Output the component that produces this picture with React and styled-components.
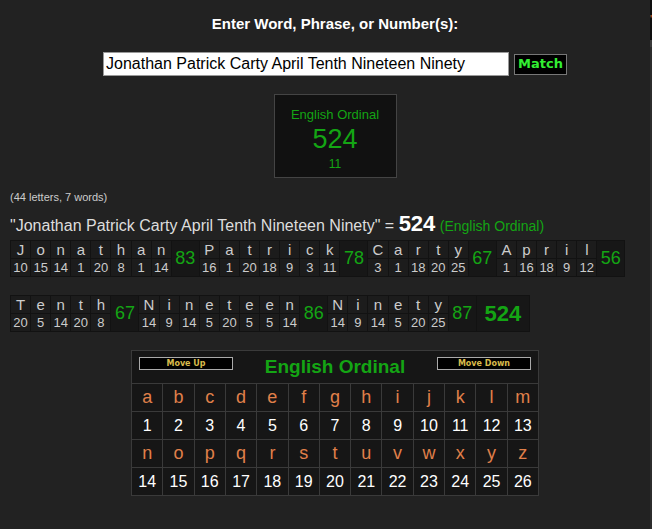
import styled, { createGlobalStyle } from "styled-components";

const GREEN = "#14a514";

const GlobalStyle = createGlobalStyle`
  html, body {
    margin: 0;
    background: #222;
    overflow: hidden;
  }
  body {
    font-family: "Liberation Sans", Arial, sans-serif;
    color: #ddd;
  }
`;

const phrase = "Jonathan Patrick Carty April Tenth Nineteen Ninety";
const rows = [
  ["Jonathan", "Patrick", "Carty", "April"],
  ["Tenth", "Nineteen", "Ninety"],
];
const alphabet = "abcdefghijklmnopqrstuvwxyz".split("");

const value = (ch) => ch.toLowerCase().charCodeAt(0) - 96;
const wordSum = (w) => w.split("").reduce((s, c) => s + value(c), 0);

const App = () => {
  const total = phrase.split(" ").reduce((s, w) => s + wordSum(w), 0);
  return (
    <Page>
      <GlobalStyle />
      <Main>
        <Center>
          <Title>Enter Word, Phrase, or Number(s):</Title>
          <Form>
            <Input defaultValue={phrase} />
            <MatchButton>Match</MatchButton>
          </Form>
          <Panel>
            <PanelName>English Ordinal</PanelName>
            <PanelValue>{total}</PanelValue>
            <PanelCount>11</PanelCount>
          </Panel>
        </Center>

        <Counts>(44 letters, 7 words)</Counts>
        <Sentence>
          "{phrase}" = <Big>{total}</Big> <CipherLabel>(English Ordinal)</CipherLabel>
        </Sentence>

        <Breakdown>
          {rows.map((words, i) => (
            <BreakTable key={i}>
              {words.map((w) => (
                <Word key={w}>
                  {w.split("").map((c, j) => (
                    <LetterCol key={j}>
                      <Cell>{c}</Cell>
                      <Cell $num>{value(c)}</Cell>
                    </LetterCol>
                  ))}
                  <SumCell>{wordSum(w)}</SumCell>
                </Word>
              ))}
              {i === rows.length - 1 && <TotalCell>{total}</TotalCell>}
            </BreakTable>
          ))}
        </Breakdown>

        <Center>
          <CipherGrid>
            <CipherHeader>
              <MoveButton>Move Up</MoveButton>
              <CipherTitle>English Ordinal</CipherTitle>
              <MoveButton>Move Down</MoveButton>
            </CipherHeader>
            {[alphabet.slice(0, 13), alphabet.slice(13)].map((half) => [
              ...half.map((c) => (
                <GridCell key={"l" + c} $letter>
                  {c}
                </GridCell>
              )),
              ...half.map((c) => <GridCell key={"n" + c}>{value(c)}</GridCell>),
            ])}
          </CipherGrid>
        </Center>
      </Main>
      <Side>
        <SideTop>'C</SideTop>
        <SideRest />
      </Side>
    </Page>
  );
};

export default App;

const Page = styled.div`
  display: flex;
  height: 529px;
`;

const Main = styled.div`
  flex: 0 0 647px;
  display: flex;
  flex-direction: column;
`;

const Side = styled.div`
  flex: 1;
  display: flex;
  flex-direction: column;
  overflow: hidden;
`;

const SideTop = styled.div`
  height: 40px;
  background: #0e0e0e;
  color: #e08040;
  font-size: 10px;
  line-height: 40px;
  white-space: nowrap;
`;

const SideRest = styled.div`
  flex: 1;
  background: #2c2c2c;
  border-top: 7px solid #3a3a3a;
`;

const Center = styled.div`
  margin-left: 20px;
  width: 630px;
  display: flex;
  flex-direction: column;
  align-items: center;
`;

const Title = styled.div`
  margin-top: 15px;
  font-size: 15px;
  line-height: 18px;
  font-weight: bold;
  color: #fff;
`;

const Form = styled.div`
  margin-top: 19px;
  display: flex;
  align-items: center;
  gap: 5px;
`;

const Input = styled.input`
  box-sizing: border-box;
  width: 406px;
  height: 24px;
  padding: 0 2px;
  border: 1px solid #999;
  background: #fff;
  color: #000;
  font-family: "Liberation Sans", Arial, sans-serif;
  font-size: 16px;
  outline: none;
`;

const MatchButton = styled.button`
  box-sizing: border-box;
  height: 21px;
  padding: 0 3px;
  background: #000;
  border: 1px solid #777;
  color: #33ee33;
  font-family: "DejaVu Sans", Verdana, sans-serif;
  font-weight: bold;
  font-size: 13px;
  line-height: 18px;
`;

const Panel = styled.div`
  box-sizing: border-box;
  margin-top: 18px;
  padding-top: 6px;
  width: 123px;
  height: 84px;
  background: #111;
  border: 1px solid #444;
  display: flex;
  flex-direction: column;
  align-items: center;
  justify-content: center;
  color: ${GREEN};
`;

const PanelName = styled.div`
  font-size: 13px;
  line-height: 15px;
`;

const PanelValue = styled.div`
  font-size: 27px;
  line-height: 35px;
`;

const PanelCount = styled.div`
  font-size: 12px;
  line-height: 14px;
`;

const Counts = styled.div`
  margin: 13px 0 0 10px;
  font-size: 11px;
  line-height: 13px;
  color: #ccc;
`;

const Sentence = styled.div`
  margin: 10px 0 0 10px;
  font-size: 16px;
  line-height: 20px;
  color: #ddd;
`;

const Big = styled.b`
  font-size: 22px;
  color: #fff;
`;

const CipherLabel = styled.span`
  font-size: 14px;
  color: ${GREEN};
`;

const Breakdown = styled.div`
  margin: 4px 0 0 10px;
  display: flex;
  flex-direction: column;
  align-items: flex-start;
  gap: 18px;
`;

const BreakTable = styled.div`
  display: flex;
  gap: 1px;
  padding: 1px;
  background: #121212;
`;

const Word = styled.div`
  display: flex;
  gap: 1px;
`;

const LetterCol = styled.div`
  display: flex;
  flex-direction: column;
  gap: 1px;
`;

const Cell = styled.div`
  width: 19.1px;
  height: 17px;
  background: #1c1c1c;
  display: flex;
  align-items: center;
  justify-content: center;
  font-size: ${(p) => (p.$num ? "13px" : "15px")};
  color: #ccc;
`;

const SumCell = styled.div`
  width: 27px;
  background: #171717;
  display: flex;
  align-items: center;
  justify-content: center;
  font-size: 18px;
  color: ${GREEN};
`;

const TotalCell = styled(SumCell)`
  width: 52px;
  font-size: 22px;
  font-weight: bold;
`;

const CipherGrid = styled.div`
  margin-top: 18px;
  width: 408px;
  box-sizing: border-box;
  display: grid;
  grid-template-columns: repeat(13, 1fr);
  gap: 1px;
  background: #3a3a3a;
  border: 1px solid #3a3a3a;
`;

const CipherHeader = styled.div`
  grid-column: 1 / -1;
  height: 32px;
  background: #161616;
  display: flex;
  align-items: center;
  justify-content: space-between;
  padding: 0 7px;
`;

const MoveButton = styled.div`
  box-sizing: border-box;
  width: 94px;
  height: 13px;
  background: #000;
  border: 1px solid #aaa;
  color: #d9bb4c;
  font-family: "DejaVu Sans", Verdana, sans-serif;
  font-weight: bold;
  font-size: 8px;
  line-height: 11px;
  text-align: center;
  margin-top: -7px;
`;

const CipherTitle = styled.div`
  font-size: 19px;
  font-weight: bold;
  color: ${GREEN};
`;

const GridCell = styled.div`
  height: 27px;
  background: #161616;
  display: flex;
  align-items: center;
  justify-content: center;
  font-size: ${(p) => (p.$letter ? "18px" : "16px")};
  color: ${(p) => (p.$letter ? "#e0804a" : "#fff")};
`;
